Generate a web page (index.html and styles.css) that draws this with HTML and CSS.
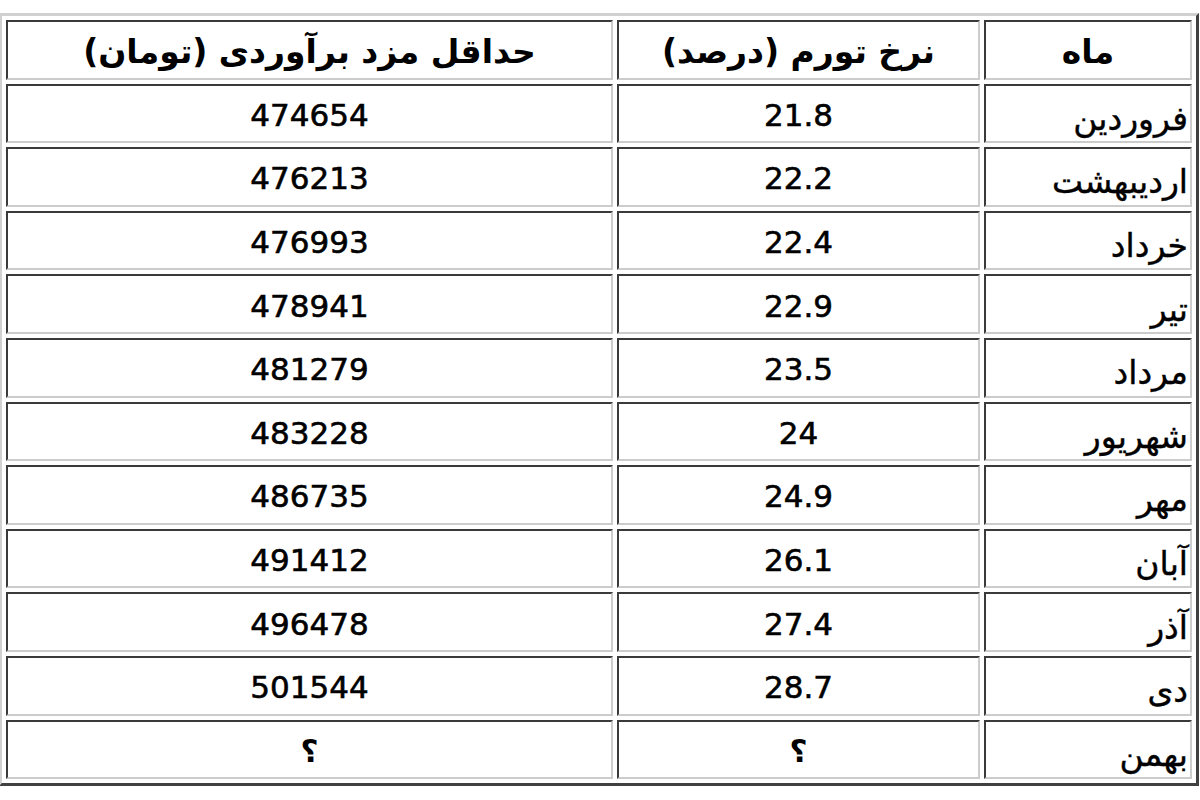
FILE: index.html
```html
<!DOCTYPE html>
<html lang="fa" dir="rtl">
<head>
<meta charset="utf-8">
<title>حداقل مزد برآوردی</title>
<link rel="stylesheet" href="styles.css">
</head>
<body>
<table class="wage-table">
  <colgroup>
    <col class="col-month">
    <col class="col-rate">
    <col class="col-wage">
  </colgroup>
  <thead>
    <tr>
      <th class="head">ماه</th>
      <th class="head">نرخ تورم (درصد)</th>
      <th class="head">حداقل مزد برآوردی (تومان)</th>
    </tr>
  </thead>
  <tbody>
    <tr><td class="month">فروردین</td><td class="num">21.8</td><td class="num">474654</td></tr>
    <tr><td class="month">اردیبهشت</td><td class="num">22.2</td><td class="num">476213</td></tr>
    <tr><td class="month">خرداد</td><td class="num">22.4</td><td class="num">476993</td></tr>
    <tr><td class="month">تیر</td><td class="num">22.9</td><td class="num">478941</td></tr>
    <tr><td class="month">مرداد</td><td class="num">23.5</td><td class="num">481279</td></tr>
    <tr><td class="month">شهریور</td><td class="num">24</td><td class="num">483228</td></tr>
    <tr><td class="month">مهر</td><td class="num">24.9</td><td class="num">486735</td></tr>
    <tr><td class="month">آبان</td><td class="num">26.1</td><td class="num">491412</td></tr>
    <tr><td class="month">آذر</td><td class="num">27.4</td><td class="num">496478</td></tr>
    <tr><td class="month">دی</td><td class="num">28.7</td><td class="num">501544</td></tr>
    <tr><td class="month">بهمن</td><td class="num q">؟</td><td class="num q">؟</td></tr>
  </tbody>
</table>
</body>
</html>
```
FILE: styles.css
```css
html, body {
  margin: 0;
  padding: 0;
  background: #fff;
}
body {
  font-family: "DejaVu Sans", "Noto Sans", sans-serif;
  color: #000;
}
.wage-table {
  margin: 13px 1px 0 0;
  width: 1199px;
  table-layout: fixed;
  border-collapse: separate;
  border-spacing: 4px;
  border-style: solid;
  border-width: 3px;
  border-color: #d0d0d0 #404040 #404040 #d0d0d0;
}
.col-month { width: 208px; }
.col-rate { width: 363px; }
.col-wage { width: 607px; }
.wage-table tr {
  height: 59.6px;
}
.wage-table th,
.wage-table td {
  padding: 0 2px;
  border-style: solid;
  border-width: 2px;
  border-color: #3a3a3a #cccccc #cccccc #3a3a3a;
  font-size: 31px;
  line-height: 1;
  vertical-align: middle;
}
.wage-table .head {
  font-weight: bold;
  font-size: 33px;
  text-align: center;
  padding-top: 3px;
}
.wage-table .month {
  text-align: right;
  font-size: 33px;
  padding-top: 10px;
  -webkit-text-stroke: 0.4px #000;
}
.wage-table .num {
  text-align: center;
  padding-top: 4px;
  -webkit-text-stroke: 0.6px #000;
}
.wage-table .q {
  font-weight: bold;
  -webkit-text-stroke: 0;
}
```
